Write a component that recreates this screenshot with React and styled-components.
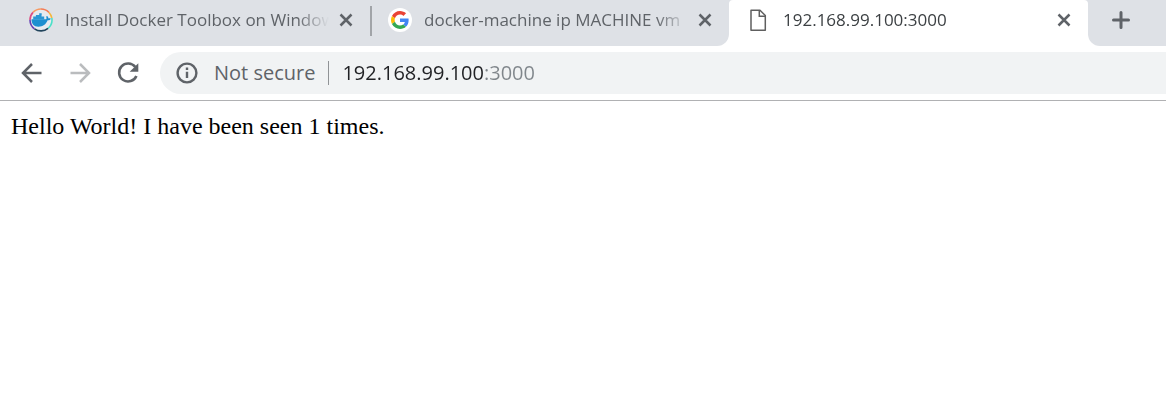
import React, { useState } from "react";
import styled, { createGlobalStyle } from "styled-components";

const GlobalStyle = createGlobalStyle`
  * { box-sizing: border-box; }
  body {
    margin: 0;
    background: #fff;
    font-family: "Open Sans", "Noto Sans", sans-serif;
  }
`;

const Browser = styled.div`
  overflow: hidden;
`;

const TabStrip = styled.nav`
  display: flex;
  height: 46px;
`;

const InactiveTabs = styled.div`
  display: flex;
  padding-left: 11px;
  background: #dee1e6;
  border-bottom-right-radius: 12px;
`;

const TabBox = styled.div`
  position: relative;
  display: flex;
  align-items: center;
  width: 359px;
  height: 46px;
  padding: 0 14px 6px 18px;
  color: ${(p) => (p.$active ? "#3c4043" : "#5f6368")};
  background: ${(p) => (p.$active ? "#fff" : "transparent")};
  border-radius: 4px 4px 0 0;

  & + &::before {
    content: "";
    position: absolute;
    left: 0;
    top: 6px;
    width: 2px;
    height: 30px;
    background: #a1a4a8;
  }
`;

const ActiveSlot = styled.div`
  background: linear-gradient(#dee1e6 12px, #fff 12px);
`;

const TabLink = styled.a`
  display: flex;
  align-items: center;
  gap: 12px;
  flex: 1;
  min-width: 0;
  margin-right: 7px;
  color: inherit;
  text-decoration: none;

  svg { flex: none; }
`;

const TabTitle = styled.span`
  flex: 1;
  overflow: hidden;
  white-space: nowrap;
  font-size: 17px;
  line-height: 24px;
  mask-image: linear-gradient(to right, #000 calc(100% - 32px), transparent);
`;

const IconButton = styled.button`
  display: flex;
  flex: none;
  align-items: center;
  justify-content: center;
  width: ${(p) => p.$size}px;
  height: ${(p) => p.$size}px;
  padding: 0;
  border: 0;
  background: none;
  color: #5f6368;

  &:disabled { color: #babcbe; }
`;

const NewTabArea = styled.div`
  flex: 1;
  padding: 4px 17px;
  background: #dee1e6;
  border-bottom-left-radius: 12px;
`;

const Toolbar = styled.header`
  display: flex;
  align-items: center;
  gap: 16px;
  padding: 6px 0 6px 16px;
  border-bottom: 1px solid #b0b1b3;
`;

const AddressBar = styled.form`
  display: flex;
  align-items: center;
  flex: 1;
  min-width: 0;
  height: 42px;
  padding-left: 16px;
  background: #f1f3f4;
  border-radius: 21px 0 0 21px;
`;

const SecurityButton = styled.button`
  display: flex;
  align-items: center;
  flex: none;
  gap: 16px;
  height: 24px;
  padding: 0 13px 0 0;
  border: 0;
  border-right: 1px solid #909396;
  background: none;
  color: #5f6368;
  font: 20px/24px "Open Sans", "Noto Sans", sans-serif;
`;

const AddressInput = styled.input`
  flex: 1;
  min-width: 0;
  height: 32px;
  padding: 0;
  margin-left: 13px;
  border: 0;
  outline: 0;
  color: transparent;
  caret-color: #202124;
  background: linear-gradient(to right, #202124 141px, #80868b 141px);
  background-clip: text;
  font: 20px/32px "Open Sans", "Noto Sans", sans-serif;
`;

const Page = styled.main`
  padding: 11px;
  color: #000;
  font-family: "Liberation Serif", "Times New Roman", serif;
  font-size: 24px;
  line-height: 28px;
`;

const Docker = () => (
  <svg width="24" height="24" viewBox="0 0 24 24" fill="none" aria-hidden="true">
    <circle cx="12" cy="12" r="11" fill="#e6ebf0" />
    <g strokeWidth="1.6">
      <path d="M12 1A11 11 0 0 1 20 4.5" stroke="#f47c55" />
      <path d="M20 4.5A11 11 0 0 1 22.8 10" stroke="#f6b63e" />
      <path d="M22.8 10A11 11 0 0 1 19 20.4" stroke="#4be0c8" />
      <path d="M19 20.4A11 11 0 0 1 5.5 20.8" stroke="#21445c" />
      <path d="M5.5 20.8A11 11 0 0 1 1 12" stroke="#6740b4" />
      <path d="M1 12A11 11 0 0 1 4 4.4" stroke="#dc4d83" />
      <path d="M4 4.4A11 11 0 0 1 12 1" stroke="#f79a62" />
    </g>
    <path d="M2.5 11.2H17c.7-.2.7-1.6.1-2.5l.9-.8c1.1.7 1.4 1.5 1.4 2.5 1-.3 1.8-.1 2.4.3-.6 1.2-1.7 1.7-3.2 1.6-1.7 4.4-4.8 6.4-9.1 6.4-4.9 0-7-3-7-7.5Z" fill="#1c8fd0" />
    <path d="M4.2 8.6h11v3h-11zM6.9 6.9h5.6v2H6.9zM10.2 5.2h2.5v2h-2.5z" fill="#2a97d4" />
  </svg>
);

const Google = () => (
  <svg width="24" height="24" viewBox="0 0 24 24" aria-hidden="true">
    <circle cx="12" cy="12" r="12" fill="#fff" />
    <g transform="translate(3 3) scale(.375)">
      <path fill="#ea4335" d="M24 9.5c3.54 0 6.71 1.22 9.21 3.6l6.85-6.85C35.9 2.38 30.47 0 24 0 14.62 0 6.51 5.38 2.56 13.22l7.98 6.19C12.43 13.72 17.74 9.5 24 9.5z" />
      <path fill="#4285f4" d="M46.98 24.55c0-1.57-.15-3.09-.38-4.55H24v9.02h12.94c-.58 2.96-2.26 5.48-4.78 7.18l7.73 6c4.51-4.18 7.09-10.36 7.09-17.65z" />
      <path fill="#fbbc05" d="M10.53 28.59A14.5 14.5 0 0 1 9.77 24c0-1.6.27-3.14.76-4.59l-7.98-6.19A24 24 0 0 0 0 24c0 3.88.92 7.54 2.56 10.78l7.97-6.19z" />
      <path fill="#34a853" d="M24 48c6.48 0 11.93-2.13 15.89-5.81l-7.73-6c-2.15 1.45-4.92 2.3-8.16 2.3-6.26 0-11.57-4.22-13.47-9.91l-7.98 6.19C6.51 42.62 14.62 48 24 48z" />
    </g>
  </svg>
);

const Document = () => (
  <svg width="24" height="24" viewBox="0 0 24 24" fill="none" stroke="#5f5f5f" strokeWidth="1.5" aria-hidden="true">
    <path d="M4 2.2H13L18.3 7.5V22.2H4Z" strokeLinejoin="round" />
    <path d="M12.3 2.2V8.2H18.3" />
  </svg>
);

const Close = () => (
  <svg width="14" height="14" viewBox="0 0 14 14" stroke="currentColor" strokeWidth="2.5" aria-hidden="true">
    <path d="M1.5 1.5 12.5 12.5M12.5 1.5 1.5 12.5" />
  </svg>
);

const Plus = () => (
  <svg width="18" height="18" viewBox="0 0 18 18" stroke="currentColor" strokeWidth="3" strokeLinecap="round" aria-hidden="true">
    <path d="M9 1.5V16.5M1.5 9H16.5" />
  </svg>
);

const Arrow = ({ forward }) => (
  <svg width="22" height="22" viewBox="0 0 22 22" fill="none" stroke="currentColor" strokeWidth="2.5" aria-hidden="true">
    <path d={forward ? "M1.5 11H19.5M11 2 20 11 11 20" : "M20.5 11H2.5M11 2 2 11 11 20"} />
  </svg>
);

const Reload = () => (
  <svg width="24" height="24" viewBox="0 0 24 24" fill="none" aria-hidden="true">
    <path d="M19.3 6A9 9 0 1 0 20.4 15" stroke="currentColor" strokeWidth="2.6" />
    <path d="M22.3 2.2V10.8H13.7Z" fill="currentColor" />
  </svg>
);

const Info = () => (
  <svg width="22" height="22" viewBox="0 0 22 22" fill="none" stroke="currentColor" strokeWidth="2.4" aria-hidden="true">
    <circle cx="11" cy="11" r="9.4" />
    <path d="M11 9.7V16M11 5.6V8" />
  </svg>
);

const Tab = ({ icon, title, active }) => (
  <TabBox $active={active}>
    <TabLink href="#" aria-current={active ? "page" : undefined}>
      {icon}
      <TabTitle>{title}</TabTitle>
    </TabLink>
    <IconButton $size={20} type="button" aria-label={`Close ${title}`}>
      <Close />
    </IconButton>
  </TabBox>
);

export default function App() {
  const [url, setUrl] = useState("192.168.99.100:3000");

  return (
    <Browser>
      <GlobalStyle />
      <TabStrip aria-label="Tabs">
        <InactiveTabs>
          <Tab icon={<Docker />} title="Install Docker Toolbox on Windows" />
          <Tab icon={<Google />} title="docker-machine ip MACHINE vm" />
        </InactiveTabs>
        <ActiveSlot>
          <Tab active icon={<Document />} title="192.168.99.100:3000" />
        </ActiveSlot>
        <NewTabArea>
          <IconButton $size={32} type="button" aria-label="New tab">
            <Plus />
          </IconButton>
        </NewTabArea>
      </TabStrip>
      <Toolbar>
        <IconButton $size={32} type="button" aria-label="Back"><Arrow /></IconButton>
        <IconButton $size={32} type="button" aria-label="Forward" disabled><Arrow forward /></IconButton>
        <IconButton $size={32} type="button" aria-label="Reload"><Reload /></IconButton>
        <AddressBar onSubmit={(e) => e.preventDefault()}>
          <SecurityButton type="button">
            <Info />
            Not secure
          </SecurityButton>
          <AddressInput
            aria-label="Address"
            value={url}
            spellCheck={false}
            onChange={(e) => setUrl(e.target.value)}
          />
        </AddressBar>
      </Toolbar>
      <Page>Hello World! I have been seen 1 times.</Page>
    </Browser>
  );
}
